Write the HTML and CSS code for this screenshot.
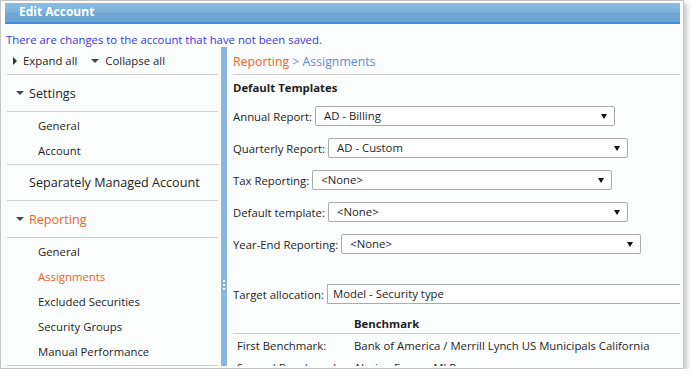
FILE: index.html
```html
<!DOCTYPE html>
<html lang="en">
<head>
    <meta charset="UTF-8">
    <meta name="viewport" content="width=device-width, initial-scale=1.0">
    <title>Edit Account</title>
    <link rel="stylesheet" href="styles.css">
</head>
<body>

    <div class="window">
        <div class="titlebar">Edit Account</div>
        <div class="notice">There are changes to the account that have not been saved.</div>

        <div class="main">
            <!-- Navigation -->
            <div class="sidebar">
                <div class="toolbar">
                    <span class="tool"><i class="tri-right"></i>Expand all</span>
                    <span class="tool"><i class="tri-down"></i>Collapse all</span>
                </div>

                <div class="section"><i class="tri-down"></i>Settings</div>
                <ul class="sublist">
                    <li>General</li>
                    <li>Account</li>
                </ul>

                <div class="section plain">Separately Managed Account</div>

                <div class="section active"><i class="tri-down"></i>Reporting</div>
                <ul class="sublist">
                    <li>General</li>
                    <li class="current">Assignments</li>
                    <li>Excluded Securities</li>
                    <li>Security Groups</li>
                    <li>Manual Performance</li>
                </ul>
            </div>

            <div class="splitter"><span class="grip"></span></div>

            <!-- Assignments form -->
            <div class="content">
                <div class="breadcrumb"><span class="crumb">Reporting</span> &gt; <span class="page">Assignments</span></div>

                <h3 class="group-title">Default Templates</h3>

                <div class="field">
                    <label>Annual Report:</label>
                    <div class="select">AD - Billing<i class="arrow"></i></div>
                </div>
                <div class="field">
                    <label>Quarterly Report:</label>
                    <div class="select">AD - Custom<i class="arrow"></i></div>
                </div>
                <div class="field">
                    <label>Tax Reporting:</label>
                    <div class="select">&lt;None&gt;<i class="arrow"></i></div>
                </div>
                <div class="field">
                    <label>Default template:</label>
                    <div class="select">&lt;None&gt;<i class="arrow"></i></div>
                </div>
                <div class="field">
                    <label>Year-End Reporting:</label>
                    <div class="select">&lt;None&gt;<i class="arrow"></i></div>
                </div>

                <div class="field target">
                    <label>Target allocation:</label>
                    <div class="textbox">Model - Security type</div>
                </div>

                <table class="benchmarks">
                    <tr>
                        <th></th>
                        <th>Benchmark</th>
                    </tr>
                    <tr>
                        <td>First Benchmark:</td>
                        <td>Bank of America / Merrill Lynch US Municipals California</td>
                    </tr>
                    <tr>
                        <td>Second Benchmark:</td>
                        <td>Alerian Energy MLP</td>
                    </tr>
                </table>
            </div>
        </div>
    </div>

</body>
</html>
```

FILE: styles.css
```css
body {
    margin: 0;
    padding: 0;
    background: #ffffff;
    font-family: "Segoe UI", "Open Sans", sans-serif;
    font-size: 11.35px;
    color: #1e1e1e;
}
.window {
    width: 682px;
    height: 367px;
    border: 1px solid #c4c4c4;
    background: #fbfdfd;
    box-shadow: 3px 3px 5px rgba(0,0,0,0.22);
    overflow: hidden;
}
.titlebar {
    margin: 2px 3px 0 4px;
    height: 19px;
    line-height: 18px;
    padding-left: 14px;
    background: linear-gradient(to bottom, #8cbce2 0%, #7fb3dc 45%, #6ea7d3 55%, #6aa4d1 100%);
    border-bottom: 2px solid #3f90d8;
    color: white;
    font-weight: bold;
    font-size: 12px;
}
.notice {
    margin-top: 8px;
    padding-left: 5px;
    line-height: 15px;
    color: #3a36e0;
}
.main {
    display: flex;
    height: 319px;
}

/* Sidebar */
.sidebar {
    margin-left: 6px;
    width: 211px;
    flex: none;
}
.toolbar {
    height: 27px;
    border-bottom: 1px solid #d0d0d0;
    display: flex;
    align-items: center;
    padding-left: 6px;
}
.tool {
    display: flex;
    align-items: center;
    margin-right: 14px;
}
.tool .tri-right {
    margin-right: 6px;
}
.tool .tri-down {
    margin-right: 6px;
}
.tri-right {
    display: inline-block;
    width: 0;
    height: 0;
    border-top: 4px solid transparent;
    border-bottom: 4px solid transparent;
    border-left: 4px solid #333;
}
.tri-down {
    display: inline-block;
    width: 0;
    height: 0;
    border-left: 4px solid transparent;
    border-right: 4px solid transparent;
    border-top: 4px solid #444;
}
.section {
    height: 36px;
    border-bottom: 1px solid #d0d0d0;
    display: flex;
    align-items: center;
    padding-left: 9px;
    font-size: 12.6px;
}
.section .tri-down {
    margin-right: 5px;
}
.section.plain {
    height: 35px;
    padding-left: 22px;
}
.section.active {
    color: #e8632a;
}
.sublist {
    list-style: none;
    margin: 0;
    padding: 1px 0 1px 31px;
    border-bottom: 1px solid #d0d0d0;
}
.sublist li {
    height: 25px;
    line-height: 25px;
}
.sublist li.current {
    color: #e8632a;
}

/* Splitter */
.splitter {
    margin-left: 3px;
    width: 6px;
    flex: none;
    background: #8ab6db;
    display: flex;
    align-items: center;
    justify-content: center;
}
.grip {
    width: 2px;
    height: 10px;
    margin-top: 156px;
    background: linear-gradient(to bottom, #fff 0, #fff 2px, transparent 2px, transparent 4px, #fff 4px, #fff 6px, transparent 6px, transparent 8px, #fff 8px, #fff 10px);
}

/* Content */
.content {
    flex: 1;
    margin-left: 6px;
    margin-right: 3px;
    overflow: hidden;
}
.breadcrumb {
    height: 27px;
    line-height: 29px;
    border-bottom: 1px solid #d0d0d0;
    font-size: 12.3px;
    color: #6a8fc4;
}
.breadcrumb .crumb {
    color: #e8632a;
}
.breadcrumb .page {
    color: #5b8dce;
}
.group-title {
    margin: 5px 0 10px 0;
    line-height: 16px;
    font-size: 11.35px;
    font-weight: bold;
}
.field {
    display: flex;
    align-items: center;
    height: 20px;
    margin-bottom: 12px;
}
.field label {
    margin-right: 3px;
    white-space: nowrap;
}
.select {
    position: relative;
    width: 290px;
    height: 18px;
    line-height: 18px;
    padding-left: 8px;
    border: 1px solid #aaa;
    border-radius: 2px;
    background: white;
    flex: none;
}
.select .arrow {
    position: absolute;
    right: 7px;
    top: 7px;
    width: 0;
    height: 0;
    border-left: 3px solid transparent;
    border-right: 3px solid transparent;
    border-top: 5px solid #111;
}
.field.target {
    margin-top: 30px;
    margin-bottom: 10px;
}
.textbox {
    width: 400px;
    height: 18px;
    line-height: 18px;
    padding-left: 5px;
    border: 1px solid #aaa;
    background: white;
    flex: none;
}
.benchmarks {
    width: 100%;
    border-collapse: collapse;
}
.benchmarks th {
    text-align: left;
    font-weight: bold;
    height: 19px;
    border-bottom: 1px solid #d0d0d0;
    padding: 0;
}
.benchmarks td {
    height: 22px;
    padding: 0;
    white-space: nowrap;
}
.benchmarks td:first-child {
    width: 117px;
    padding-left: 4px;
}
```
